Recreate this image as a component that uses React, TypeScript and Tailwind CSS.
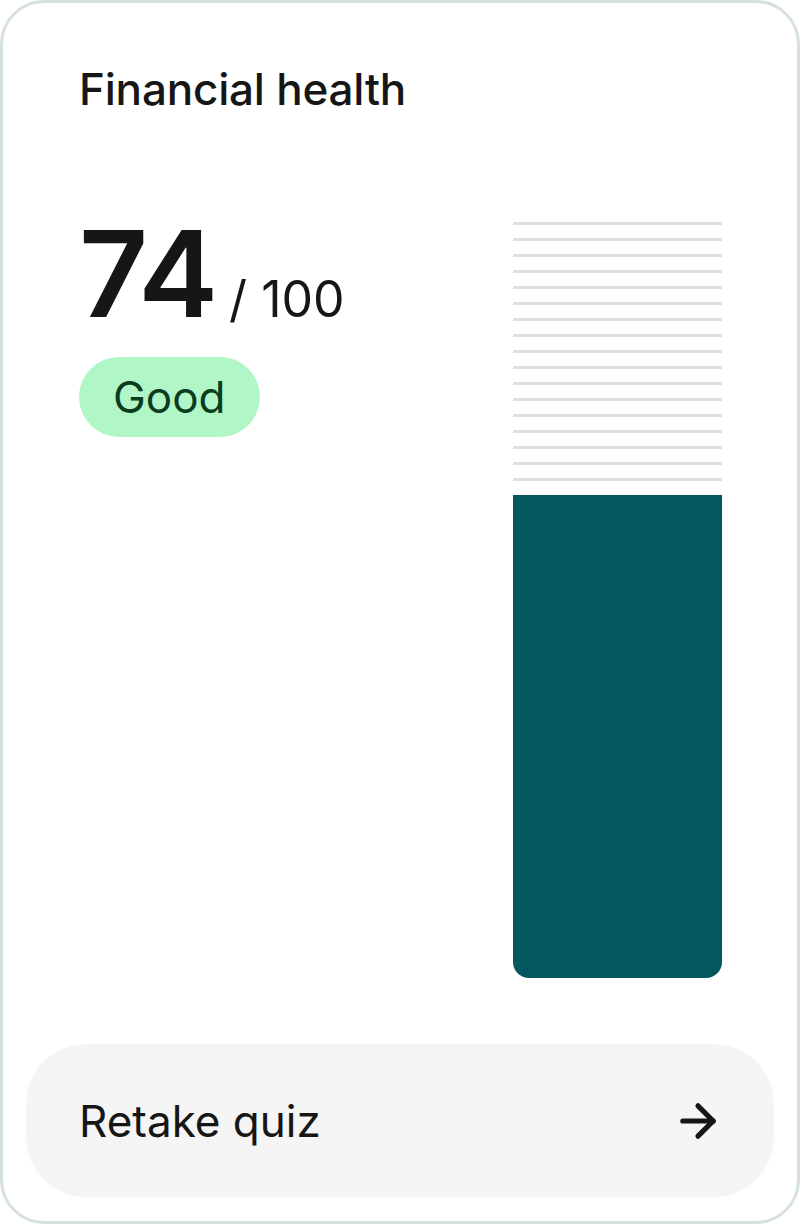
import { ArrowRight } from "lucide-react";

const LINES = Array.from({ length: 17 });

export default function App() {
  return (
    <div className="h-[1224px] w-[800px] bg-white font-['Inter',sans-serif] text-[#161616]">
      <div className="flex h-full flex-col rounded-[44px] border-[3px] border-[#d4e2da] bg-white px-[23px] pb-[24px]">
        <h1 className="mt-[60px] pl-[53px] text-[44px] leading-[52px] font-medium tracking-[-0.2px]">
          Financial health
        </h1>

        <div className="mt-[107px] flex flex-1 justify-between pl-[53px] pr-[52px]">
          {/* score */}
          <div className="-mt-[3px] flex flex-col items-start">
            <div className="flex items-baseline">
              <span className="text-[120px] leading-[110px] font-semibold tracking-[-3px]">74</span>
              <span className="ml-[14px] text-[50px] leading-none font-normal">/ 100</span>
            </div>
            <span className="mt-[28px] rounded-full bg-[#b1f6c7] px-[34px] py-[14px] text-[44px] leading-[52px] text-[#0a3d1f]">
              Good
            </span>
          </div>

          {/* gauge */}
          <div className="flex w-[209px] flex-col">
            <div className="flex flex-col gap-[13px]">
              {LINES.map((_, i) => (
                <div key={i} className="h-[3px] bg-[#dfdfdf]" />
              ))}
            </div>
            <div className="mt-[14px] h-[483px] rounded-b-[16px] bg-[#02585e]" />
          </div>
        </div>

        <button
          type="button"
          className="mt-[66px] flex h-[153px] items-center justify-between rounded-[60px] bg-[#f4f5f4] pr-[50px] pl-[53px]"
        >
          <span className="text-[44px] leading-[52px] font-normal">Retake quiz</span>
          <ArrowRight size={52} strokeWidth={2.4} />
        </button>
      </div>
    </div>
  );
}
